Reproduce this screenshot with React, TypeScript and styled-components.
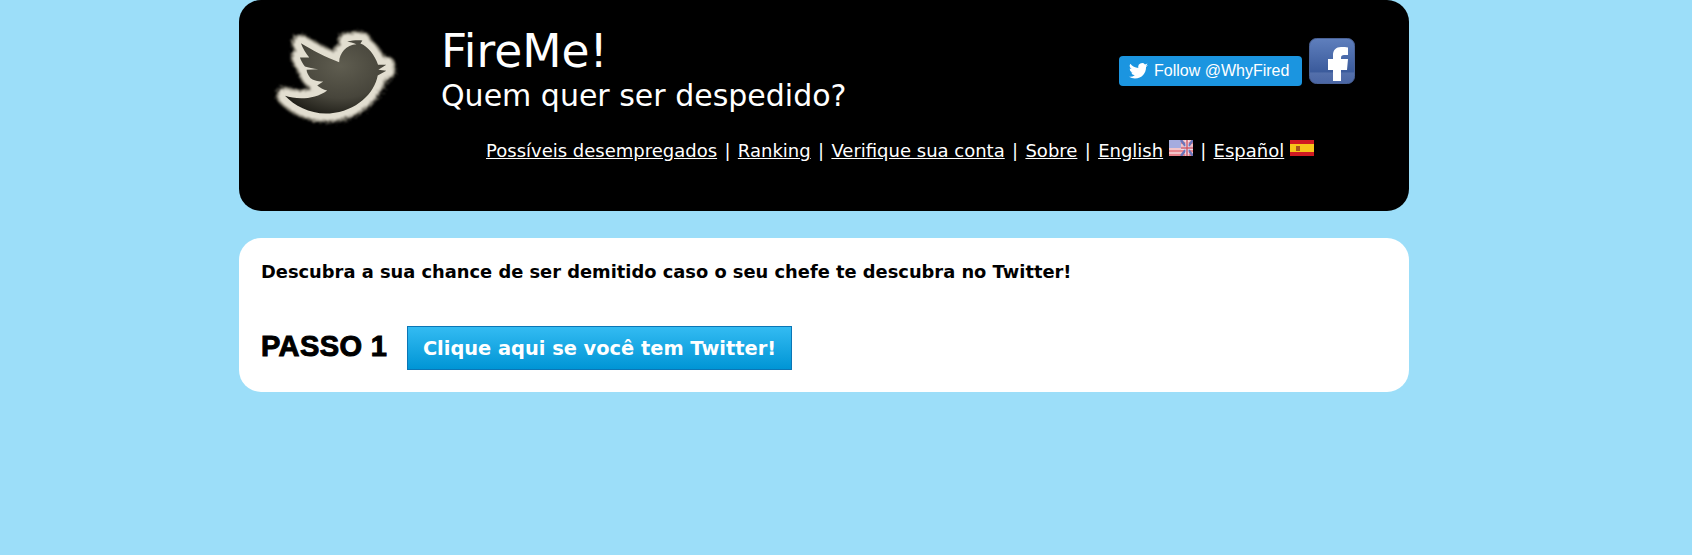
import React from "react";
import styled, { createGlobalStyle } from "styled-components";

const Global = createGlobalStyle`
  html, body { margin: 0; padding: 0; background: #9cdef9; }
  body { font-family: "DejaVu Sans", Verdana, sans-serif; }
`;

const Page = styled.div`
  width: 1170px;
  margin-left: 239px;
  display: flex;
  flex-direction: column;
  gap: 27px;
`;

const Header = styled.header`
  height: 211px;
  box-sizing: border-box;
  background: #000;
  border-radius: 22px;
  display: flex;
  padding: 0 54px 0 31px;
  color: #fff;
`;

const LogoWrap = styled.div`
  width: 171px;
  flex: none;
  padding-top: 25px;
`;

const Main = styled.div`
  flex: 1;
  display: flex;
  flex-direction: column;
`;

const TopRow = styled.div`
  display: flex;
  justify-content: space-between;
  align-items: flex-start;
`;

const Titles = styled.div`
  padding-top: 26px;
`;

const Title = styled.h1`
  margin: 0;
  font-size: 45.5px;
  font-weight: 400;
  line-height: 52px;
`;

const Subtitle = styled.h2`
  margin: 0;
  font-size: 30px;
  font-weight: 400;
  line-height: 36px;
`;

const Social = styled.div`
  display: flex;
  align-items: flex-start;
  gap: 7px;
  padding-top: 38px;
`;

const FollowButton = styled.a`
  margin-top: 18px;
  width: 183px;
  height: 30px;
  box-sizing: border-box;
  border-radius: 4px;
  background: #1b95e0;
  color: #fff;
  display: flex;
  align-items: center;
  gap: 6px;
  padding-left: 10px;
  font-family: "Liberation Sans", Arial, sans-serif;
  font-size: 16px;
  white-space: nowrap;
`;

const Nav = styled.nav`
  margin: 25px 0 0 4px;
  text-align: center;
  font-size: 18px;
  line-height: 24px;
  white-space: nowrap;
`;

const NavLink = styled.a`
  color: #fff;
  text-decoration: underline;
`;

const Sep = styled.span`
  margin: 0 1.6px;
`;

const Flag = styled.svg`
  vertical-align: 1px;
`;

const Panel = styled.section`
  height: 154px;
  box-sizing: border-box;
  background: #fff;
  border-radius: 22px;
  padding: 22px 22px 0;
  color: #000;
`;

const Lead = styled.p`
  margin: 0;
  font-size: 17.85px;
  font-weight: 700;
  line-height: 24px;
`;

const StepRow = styled.div`
  margin-top: 42px;
  display: flex;
  align-items: center;
  gap: 21px;
`;

const StepLabel = styled.span`
  font-family: "Liberation Sans", Arial, sans-serif;
  font-weight: 700;
  font-size: 29px;
  line-height: 36px;
  margin-top: -4px;
  width: 125px;
  white-space: nowrap;
  -webkit-text-stroke: 1px #000;
  letter-spacing: 0.4px;
`;

const CTA = styled.button`
  width: 385px;
  height: 44px;
  box-sizing: border-box;
  border: 1px solid #0b76b6;
  background: linear-gradient(#33bbf2, #0095d5);
  color: #fff;
  font-family: "DejaVu Sans", Verdana, sans-serif;
  font-weight: 700;
  font-size: 19.4px;
  padding: 0;
  white-space: nowrap;
`;

const birdPath =
  "M183 135 C215 155 260 178 298 192 C298 165 320 140 350 138 C340 134 330 132 322 130 C340 126 355 125 368 127 L362 136 C385 145 405 170 415 200 L440 200 L416 215 L440 218 L414 232 C405 285 350 340 270 346 C215 350 165 325 135 293 C170 305 225 305 262 277 C250 275 240 268 232 262 L250 250 C232 250 218 245 212 240 C205 232 200 222 200 215 L235 213 C220 212 205 208 195 205 C188 196 182 186 180 178 L208 178 C198 165 188 150 183 135 Z";

const Bird = () => (
  <svg width="133" height="103" viewBox="90 80 400 310" aria-hidden="true">
    <defs>
      <filter id="halo" x="-20%" y="-20%" width="140%" height="140%">
        <feTurbulence type="fractalNoise" baseFrequency="0.3" numOctaves="3" seed="4" result="n" />
        <feDisplacementMap in="SourceGraphic" in2="n" scale="20" />
        <feGaussianBlur stdDeviation="2.500" />
      </filter>
      <filter id="spray" x="-20%" y="-20%" width="140%" height="140%">
        <feTurbulence type="fractalNoise" baseFrequency="0.5" numOctaves="2" seed="9" result="n" />
        <feDisplacementMap in="SourceGraphic" in2="n" scale="30" />
        <feGaussianBlur stdDeviation="4" />
      </filter>
      <radialGradient id="body" cx="0.55" cy="0.35" r="0.8">
        <stop offset="0" stopColor="#5f5d50" />
        <stop offset="0.55" stopColor="#47453b" />
        <stop offset="1" stopColor="#100f0a" />
      </radialGradient>
    </defs>
    <path d={birdPath} fill="#6f6c5f" stroke="#6f6c5f" strokeWidth="56" strokeLinejoin="round" filter="url(#spray)" />
    <path d={birdPath} fill="#e2ded0" stroke="#e2ded0" strokeWidth="44" strokeLinejoin="round" filter="url(#halo)" />
    <path d={birdPath} fill="url(#body)" />
  </svg>
);

const TwitterGlyph = () => (
  <svg width="19" height="16" viewBox="0 0 24 20" fill="#fff" aria-hidden="true">
    <path d="M24 2.4a9.8 9.8 0 0 1-2.8.8A4.9 4.9 0 0 0 23.300.5a9.800 9.800 0 0 1-3.100 1.200 4.900 4.900 0 0 0-8.400 4.500A14 14 0 0 1 1.700.9a4.900 4.900 0 0 0 1.500 6.600 4.900 4.900 0 0 1-2.200-.6v.1a4.900 4.900 0 0 0 3.900 4.800 4.900 4.900 0 0 1-2.200.1 4.900 4.900 0 0 0 4.600 3.400A9.900 9.900 0 0 1 0 17.300 14 14 0 0 0 7.500 19.500c9.100 0 14-7.500 14-14v-.6A10 10 0 0 0 24 2.400z" />
  </svg>
);

const FacebookIcon = () => (
  <svg width="46" height="46" viewBox="0 0 46 46" aria-hidden="true">
    <defs>
      <linearGradient id="fb" x1="0" y1="0" x2="0" y2="1">
        <stop offset="0" stopColor="#5f7fbd" />
        <stop offset="0.75" stopColor="#3a5a9b" />
        <stop offset="0.76" stopColor="#5470ab" />
        <stop offset="1" stopColor="#4a66a5" />
      </linearGradient>
    </defs>
    <rect x="0.5" y="0.5" width="45" height="45" rx="7" fill="url(#fb)" stroke="#4a6296" />
    <path d="M24 43V32h-5V21h5v-4c0-5 3-8 8-8 3 0 5 .2 7 .4V17h-4c-2 0-3 .8-3 3v1h7l-1 11h-6v11z" fill="#fff" />
  </svg>
);

const UkFlag = () => (
  <Flag width="24" height="16" viewBox="0 0 24 16" aria-hidden="true">
    <rect width="24" height="16" fill="#f3c4c8" />
    <path d="M0 3h24M0 7h24M0 11h24M0 15h24" stroke="#e8707a" strokeWidth="1.500" />
    <rect width="12" height="8" fill="#a5acdf" />
    <path d="M12 0L24 16M24 0L12 16" stroke="#6a74bb" strokeWidth="2.500" />
    <path d="M18 0v16M12 8h12" stroke="#eef" strokeWidth="3" />
    <path d="M18 0v16M12 8h12" stroke="#d05a68" strokeWidth="1.500" />
  </Flag>
);

const EsFlag = () => (
  <Flag width="24" height="16" viewBox="0 0 24 16" aria-hidden="true">
    <rect width="24" height="16" fill="#d01a22" />
    <rect y="4" width="24" height="8" fill="#f7c61a" />
    <rect x="6" y="6" width="4" height="5" fill="#a8571c" />
  </Flag>
);

export default function App() {
  return (
    <>
      <Global />
      <Page>
        <Header>
          <LogoWrap>
            <Bird />
          </LogoWrap>
          <Main>
            <TopRow>
              <Titles>
                <Title>FireMe!</Title>
                <Subtitle>Quem quer ser despedido?</Subtitle>
              </Titles>
              <Social>
                <FollowButton>
                  <TwitterGlyph />
                  Follow @WhyFired
                </FollowButton>
                <FacebookIcon />
              </Social>
            </TopRow>
            <Nav>
              <NavLink>Possíveis desempregados</NavLink> <Sep>|</Sep> <NavLink>Ranking</NavLink> <Sep>|</Sep>{" "}
              <NavLink>Verifique sua conta</NavLink> <Sep>|</Sep> <NavLink>Sobre</NavLink> <Sep>|</Sep>{" "}
              <NavLink>English</NavLink> <UkFlag /> <Sep>|</Sep> <NavLink>Español</NavLink> <EsFlag />
            </Nav>
          </Main>
        </Header>
        <Panel>
          <Lead>Descubra a sua chance de ser demitido caso o seu chefe te descubra no Twitter!</Lead>
          <StepRow>
            <StepLabel>PASSO 1</StepLabel>
            <CTA>Clique aqui se você tem Twitter!</CTA>
          </StepRow>
        </Panel>
      </Page>
    </>
  );
}
